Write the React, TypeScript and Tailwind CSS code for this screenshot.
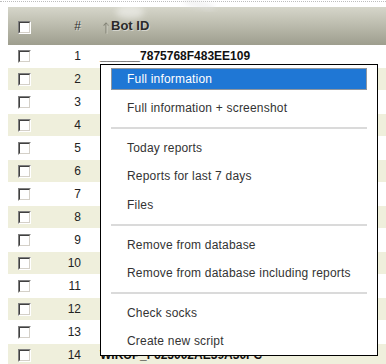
import React from "react";

function Checkbox() {
  return (
    <div className="w-[13px] h-[13px] border border-t-[#808080] border-l-[#808080] border-b-white border-r-white">
      <div className="w-full h-full border border-t-[#404040] border-l-[#404040] border-b-[#d4d0c8] border-r-[#d4d0c8] bg-white" />
    </div>
  );
}

const ids: Record<number, string> = {
  1: "______7875768F483EE109",
  14: "WIKUP_F625002AE39A30FC",
};

type MenuEntry = { t: string; active?: boolean } | "sep";

const menu: MenuEntry[] = [
  { t: "Full information", active: true },
  { t: "Full information + screenshot" },
  "sep",
  { t: "Today reports" },
  { t: "Reports for last 7 days" },
  { t: "Files" },
  "sep",
  { t: "Remove from database" },
  { t: "Remove from database including reports" },
  "sep",
  { t: "Check socks" },
  { t: "Create new script" },
];

export default function App() {
  const rows = Array.from({ length: 14 }, (_, i) => i + 1);
  return (
    <div className="relative w-[386px] h-[364px] overflow-hidden bg-white font-['Liberation_Sans',Arial,sans-serif]">
      {/* dotted top rule */}
      <div className="mt-[1px] border-t border-dotted border-[#bdbdbd]" />

      {/* table */}
      <div className="mt-[5px] ml-[8px]">
        {/* header */}
        <div className="flex h-[38px] bg-[linear-gradient(to_bottom,#d6d6ca,#9e9e8e)]">
          <div className="w-[40px] pl-[10px] pt-[3px] flex items-center">
            <Checkbox />
          </div>
          <div className="w-[33px] flex items-center justify-end text-[12px] text-[#333] [text-shadow:1px_1px_0_rgba(255,255,255,0.45)]">
            #
          </div>
          <div className="flex-1 pl-[22px] flex items-center text-[13px] [text-shadow:1px_1px_0_rgba(255,255,255,0.45)]">
            <svg width="6" height="12" viewBox="0 0 6 12" className="mr-[2px] mt-[3px]">
              <path d="M3 1 L3 11.5" stroke="#858578" strokeWidth="1.2" />
              <path d="M0.6 3.6 L3 1 L5.4 3.6" stroke="#858578" strokeWidth="1.1" fill="none" />
              <path d="M4 2 L4 12" stroke="#e8e8e0" strokeWidth="0.8" opacity="0.6" />
            </svg>
            <span className="font-bold text-[#2a2a2a]">Bot ID</span>
          </div>
        </div>

        {/* rows */}
        {rows.map((n) => (
          <div
            key={n}
            className={`flex h-[23px] border-b border-white ${n % 2 === 0 ? "bg-[#efefdc]" : "bg-white"}`}
          >
            <div className="w-[40px] pl-[10px] flex items-center">
              <Checkbox />
            </div>
            <div className="w-[33px] flex items-center justify-end text-[12px] text-[#222]">{n}</div>
            <div className="flex-1 pl-[19px] flex items-center text-[12px] font-bold text-[#111] whitespace-nowrap">
              {ids[n] ?? ""}
            </div>
          </div>
        ))}
      </div>

      {/* faint watermark */}
      <svg className="absolute left-0 top-0 pointer-events-none" width="386" height="40">
        <defs>
          <filter id="blur" x="-50%" y="-50%" width="200%" height="200%">
            <feGaussianBlur stdDeviation="3" />
          </filter>
        </defs>
        <ellipse cx="130" cy="12" rx="14" ry="7" fill="#ffffff" opacity="0.45" filter="url(#blur)" />
        <path d="M186 1 L212 8" stroke="#e2e2e2" strokeWidth="3" strokeLinecap="round" filter="url(#blur)" />
      </svg>

      {/* context menu */}
      <div className="absolute left-[100px] top-[64px] w-[278px] border border-black bg-white text-[12px] tracking-[0.2px] text-[#333]">
        {menu.map((m, i) =>
          m === "sep" ? (
            <div key={i} className="h-[11.5px] px-[10px] flex items-center">
              <div className="w-full h-[2px] bg-[#dadada]" />
            </div>
          ) : (
            <div
              key={i}
              className={`${i === menu.length - 1 ? "h-[27px]" : "h-[28.5px]"} px-[10px] flex items-center`}
            >
              <div
                className={`w-full h-[22px] pl-[15px] flex items-center border whitespace-nowrap ${
                  m.active ? "bg-[#1f77d5] border-[#8e96a0] text-white" : "border-transparent"
                }`}
              >
                {m.t}
              </div>
            </div>
          )
        )}
      </div>
    </div>
  );
}
